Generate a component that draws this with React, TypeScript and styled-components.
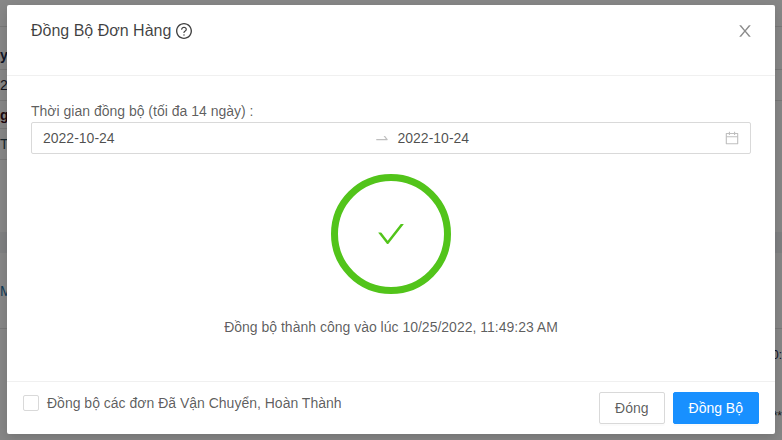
import React from 'react'
import styled, { createGlobalStyle } from 'styled-components'

const GlobalStyle = createGlobalStyle`
  html, body {
    margin: 0;
    padding: 0;
    background: #fff;
    font-family: "Liberation Sans", Arial, sans-serif;
  }
`

const Page = styled.div`
  position: relative;
  width: 782px;
  height: 440px;
  overflow: hidden;
`

const Table = styled.div`
  display: flex;
  flex-direction: column;
  height: 100%;
`

const Row = styled.div<{ $h: number; $band?: boolean }>`
  display: flex;
  justify-content: space-between;
  height: ${(p) => p.$h}px;
  flex-shrink: 0;
  background: ${(p) => (p.$band ? '#f0f2f5' : '#fff')};
`

const Cell = styled.div<{ $rule?: boolean; $color?: string; $bold?: boolean; $right?: boolean; $pad?: number }>`
  box-sizing: border-box;
  width: 50%;
  display: flex;
  align-items: center;
  justify-content: ${(p) => (p.$right ? 'flex-end' : 'flex-start')};
  padding-top: ${(p) => p.$pad || 0}px;
  border-bottom: 1px solid ${(p) => (p.$rule ? '#e2e2e2' : 'transparent')};
  color: ${(p) => p.$color || '#1a1a1a'};
  font-size: ${(p) => (p.$right ? 12 : 14)}px;
  font-weight: ${(p) => (p.$bold ? 700 : 400)};
  white-space: pre;
`

const Mask = styled.div`
  position: absolute;
  inset: 0;
  background: rgba(0, 0, 0, 0.47);
`

const Modal = styled.div`
  position: absolute;
  left: 7px;
  top: 5px;
  width: 768px;
  height: 429px;
  display: flex;
  flex-direction: column;
  background: #fff;
  border-radius: 2px;
  box-shadow: 0 4px 12px rgba(0, 0, 0, 0.15);
  color: rgba(0, 0, 0, 0.65);
  font-size: 14px;
  line-height: 22px;
`

const Header = styled.div`
  box-sizing: border-box;
  height: 71px;
  flex-shrink: 0;
  padding: 15px 22px 0 24px;
  display: flex;
  justify-content: space-between;
  border-bottom: 1px solid #f0f0f0;
`

const Title = styled.div`
  display: flex;
  align-items: center;
  gap: 5px;
  height: 22px;
  font-size: 16px;
  color: rgba(0, 0, 0, 0.75);
`

const CloseButton = styled.div`
  display: flex;
  padding-top: 3px;
  color: #8c8c8c;
`

const Body = styled.div`
  flex: 1;
  padding: 24px 24px 0;
  display: flex;
  flex-direction: column;
`

const RangePicker = styled.div`
  box-sizing: border-box;
  height: 32px;
  padding: 0 11px;
  display: flex;
  align-items: center;
  border: 1px solid #d9d9d9;
  border-radius: 2px;
  color: rgba(0, 0, 0, 0.7);
`

const DateText = styled.div`
  flex: 1;
`

const Separator = styled.div`
  display: flex;
  padding: 0 9px 0 8px;
  color: rgba(0, 0, 0, 0.25);
`

const Suffix = styled.div`
  display: flex;
  margin-left: 4px;
  color: rgba(0, 0, 0, 0.25);
`

const Result = styled.div`
  display: flex;
  flex-direction: column;
  align-items: center;
  margin-top: 20px;
`

const Progress = styled.div`
  box-sizing: border-box;
  width: 120px;
  height: 120px;
  display: flex;
  align-items: center;
  justify-content: center;
  border: 7px solid #52c41a;
  border-radius: 50%;
  color: #52c41a;
`

const Message = styled.div`
  margin-top: 22px;
`

const Footer = styled.div`
  box-sizing: border-box;
  height: 53px;
  flex-shrink: 0;
  padding: 10px 16px;
  display: flex;
  justify-content: space-between;
  border-top: 1px solid #f0f0f0;
`

const CheckLabel = styled.label`
  display: flex;
  align-items: center;
  gap: 8px;
  height: 22px;
`

const CheckBox = styled.span`
  box-sizing: border-box;
  width: 16px;
  height: 16px;
  border: 1px solid #d9d9d9;
  border-radius: 2px;
`

const Actions = styled.div`
  display: flex;
  gap: 8px;
`

const Button = styled.button<{ $primary?: boolean }>`
  box-sizing: border-box;
  height: 32px;
  padding: 0 15px;
  font: inherit;
  border: 1px solid ${(p) => (p.$primary ? '#1890ff' : '#d9d9d9')};
  border-radius: 2px;
  background: ${(p) => (p.$primary ? '#1890ff' : '#fff')};
  color: ${(p) => (p.$primary ? '#fff' : 'rgba(0, 0, 0, 0.65)')};
  box-shadow: 0 2px 0 rgba(0, 0, 0, 0.015);
`

const Icon = ({ size, d }: { size: number; d: string | string[] }) => (
  <svg width={size} height={size} viewBox="64 64 896 896" fill="currentColor">
    {([] as string[]).concat(d).map((p) => (
      <path key={p} d={p} />
    ))}
  </svg>
)

const QUESTION = [
  'M512 64C264.6 64 64 264.6 64 512s200.6 448 448 448 448-200.6 448-448S759.4 64 512 64zm0 820c-205.4 0-372-166.6-372-372s166.6-372 372-372 372 166.6 372 372-166.6 372-372 372z',
  'M623.6 316.7C593.6 290.4 554 276 512 276s-81.6 14.5-111.6 40.7C369.2 344 352 380.7 352 420v7.6c0 4.4 3.6 8 8 8h48c4.4 0 8-3.6 8-8V420c0-44.1 43.1-80 96-80s96 35.9 96 80c0 31.1-22 59.6-56.1 72.7-21.2 8.1-39.2 22.3-52.1 40.9-13.1 19-19.9 41.8-19.9 64.9V620c0 4.4 3.6 8 8 8h48c4.4 0 8-3.6 8-8v-22.7a48.3 48.3 0 0 1 30.9-44.8c59-22.7 97.1-74.7 97.1-132.5.1-39.3-17.1-76-48.3-103.3z',
  'M472 732a40 40 0 1 0 80 0 40 40 0 1 0-80 0z',
]
const CLOSE =
  'M563.8 512l262.5-312.9c4.4-5.2.7-13.1-6.1-13.1h-79.8c-4.7 0-9.2 2.1-12.3 5.7L511.6 449.8 295.1 191.7c-3-3.6-7.5-5.7-12.3-5.7H203c-6.8 0-10.5 7.9-6.1 13.1L459.4 512 196.9 824.9A7.95 7.95 0 0 0 203 838h79.8c4.7 0 9.2-2.1 12.3-5.7l216.5-258.1 216.5 258.1c3 3.6 7.5 5.7 12.3 5.7h79.8c6.8 0 10.5-7.9 6.1-13.1L563.8 512z'
const CALENDAR =
  'M880 184H712v-64c0-4.4-3.6-8-8-8h-56c-4.4 0-8 3.6-8 8v64H384v-64c0-4.4-3.6-8-8-8h-56c-4.4 0-8 3.6-8 8v64H144c-17.7 0-32 14.3-32 32v664c0 17.7 14.3 32 32 32h736c17.7 0 32-14.3 32-32V216c0-17.7-14.3-32-32-32zm-40 656H184V460h656v380zM184 392V256h128v48c0 4.4 3.6 8 8 8h56c4.4 0 8-3.6 8-8v-48h256v48c0 4.4 3.6 8 8 8h56c4.4 0 8-3.6 8-8v-48h128v136H184z'
const SWAP_RIGHT =
  'M873.1 596.2l-164-208A32 32 0 0 0 684 376h-64.8c-6.7 0-10.4 7.7-6.3 13l144.3 183H152c-4.4 0-8 3.6-8 8v60c0 4.4 3.6 8 8 8h695.9c26.8 0 41.7-30.8 25.2-51.8z'
const CHECK =
  'M912 190h-69.9c-9.8 0-19.1 4.5-25.1 12.2L404.7 724.5 207 474a32 32 0 0 0-25.1-12.2H112c-6.7 0-10.4 7.7-6.3 12.9l273.9 347c12.8 16.2 37.4 16.2 50.3 0l488.4-618.9c4.1-5.1.4-12.8-6.3-12.8z'

// the table that shows behind the mask, only its edges stick out past the modal
const rows = [
  { h: 27, lr: true, rr: true },
  { h: 43, lr: true, rr: true, left: 'y', bold: true, color: '#1f2d4d', pad: 14 },
  { h: 31, lr: true, rr: true, left: '2', color: '#2a2a3a' },
  { h: 28, lr: true, left: 'g', bold: true, color: '#3a1020' },
  { h: 31, lr: true, left: 'T', color: '#2f4a5a' },
  { h: 72 },
  { h: 21, band: true },
  { h: 76, lr: true, rr: true, left: 'M', color: '#1d6fa5' },
  { h: 52, right: '0:', color: '#1a1a40' },
  { h: 25, left: '  J', color: '#b5751a' },
  { h: 20, right: '**', color: '#333' },
  { h: 14 },
]

export default function App() {
  return (
    <Page>
      <GlobalStyle />
      <Table>
        {rows.map((r, i) => (
          <Row key={i} $h={r.h} $band={r.band}>
            <Cell $rule={r.lr} $color={r.color} $bold={r.bold} $pad={r.pad}>
              {r.left}
            </Cell>
            <Cell $right $rule={r.rr} $color={r.color}>
              {r.right}
            </Cell>
          </Row>
        ))}
      </Table>
      <Mask />
      <Modal>
        <Header>
          <Title>
            Đồng Bộ Đơn Hàng <Icon size={16} d={QUESTION} />
          </Title>
          <CloseButton>
            <Icon size={16} d={CLOSE} />
          </CloseButton>
        </Header>
        <Body>
          <div>Thời gian đồng bộ (tối đa 14 ngày) :</div>
          <RangePicker>
            <DateText>2022-10-24</DateText>
            <Separator>
              <Icon size={14} d={SWAP_RIGHT} />
            </Separator>
            <DateText>2022-10-24</DateText>
            <Suffix>
              <Icon size={14} d={CALENDAR} />
            </Suffix>
          </RangePicker>
          <Result>
            <Progress>
              <Icon size={28} d={CHECK} />
            </Progress>
            <Message>Đồng bộ thành công vào lúc 10/25/2022, 11:49:23 AM</Message>
          </Result>
        </Body>
        <Footer>
          <CheckLabel>
            <CheckBox />
            Đồng bộ các đơn Đã Vận Chuyển, Hoàn Thành
          </CheckLabel>
          <Actions>
            <Button>Đóng</Button>
            <Button $primary>Đồng Bộ</Button>
          </Actions>
        </Footer>
      </Modal>
    </Page>
  )
}
